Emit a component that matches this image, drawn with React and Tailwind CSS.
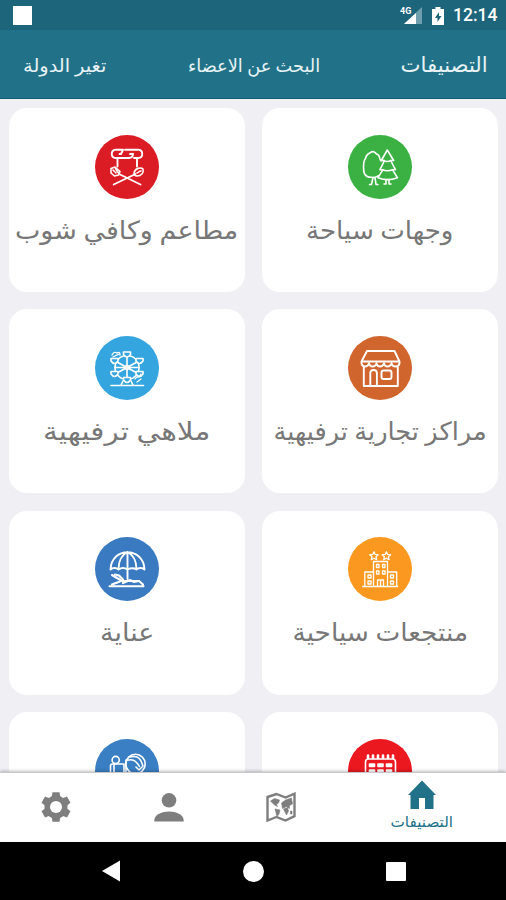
import React from "react";

const stroke = {
  fill: "none",
  stroke: "white",
  strokeWidth: 1.6,
  strokeLinecap: "round",
  strokeLinejoin: "round",
};

function Badge({ color, children }) {
  return (
    <svg viewBox="0 0 64 64" className="block size-16 shrink-0" {...stroke}>
      <circle cx="32" cy="32" r="32" fill={color} stroke="none" />
      {children}
    </svg>
  );
}

const Trees = () => (
  <Badge color="#3bb143">
    <path d="M30.500 40.500c-2 2-3 1.500-5 2-3-.5-6 .5-7.500-2-3-2-2-5-2.500-8 0-4 0-7 2-9 .5-4 3-5 5-6 3-2 5 0 6 1.500 3 .5 3 3 3.500 5l1 2" />
    <path d="M25 42.500l-1.500 7h-2M27 42.500l1 7h2" />
    <path d="M39.300 15l-6 10.500h3.200l-4.500 9.200h3l-5 8c6 2.500 13 2.500 19.400 0l-5-8h3l-4.700-9.200h3z" />
    <path d="M35 25.500q4 2 8 0M34.500 34.700q5 2 10 0M38 44.500v4.500h-2M41 44.500v4.500h2" />
  </Badge>
);

const Chef = () => (
  <Badge color="#dc1c24">
    <path d="M28 15l-2 4h-1.500M30 14.800h13.500c5 .5 5 8 0 8.200h-4.500M28 14.800h-7.500c-5 .5-5 8 0 8.200H34c3 0 4-1.500 4-4.200M35 19h3" strokeWidth="1.900" />
    <path d="M22.500 23.500v8M42 23.500v8" strokeWidth="1.900" />
    <path d="M24 39l21.500 10.500M40.500 39L18.700 49.500" strokeWidth="1.900" />
    <path d="M16 33.500l4-1.500 5 4.500-1.500 3.500-4 1-3.500-3zM18 35l3 3M20.500 33.500l2.500 4M39 38c1-5 7-6 9-4 1 4-2 7-6 7-2 0-3-1-3-3zM42 38c1 0 2-2 4-2" />
  </Badge>
);

const Shop = () => (
  <Badge color="#d0662e">
    <g strokeWidth="1.900">
      <path d="M19 15h27.500L51.500 25.500H13.500zM13.500 25.500v2c1 4 6 4 7.500 0 1 4 6 4 7.500 0 1 4 6 4 7.500 0 1 4 6 4 7.500 0 1 4 7 4 8 0v-2" />
      <path d="M15.800 30.500V50h34V30.500M22.300 50V37q0-3 3.300-3t3.300 3v13" />
      <rect x="33.500" y="34.500" width="10" height="8.500" rx="2" />
    </g>
  </Badge>
);

const cabins = [
  [32, 18.5],
  [44.500, 25],
  [44.500, 38],
  [32, 44],
  [19.500, 38],
  [19.500, 25],
];

const FerrisWheel = () => (
  <Badge color="#35a5df">
    <circle cx="32" cy="31.500" r="12" />
    <circle cx="32" cy="31.500" r="2" fill="white" />
    <path d="M32 21v21M22 26l20 11M42 26L22 37M20 31.500h24" strokeWidth="1.600" />
    {cabins.map(([x, y]) => (
      <path
        key={`${x}-${y}`}
        fill="#35a5df"
        d={`M${x - 3.5} ${y - 2.5}h7v2.500q-3.500 5-7 0z`}
      />
    ))}
    <path d="M16 49.500h32.500M28 45l-2 4M36 45l2 4" />
    <path d="M17 19q2-4 5-2 3-2 3 2M18 21l6-3M40 43q2-3 4-2l2-3M42 46l4-3" strokeWidth="1.300" />
  </Badge>
);

const Resort = () => (
  <Badge color="#fb9820">
    <path
      strokeWidth="1.300"
      d="M26 14.700l1.200 2.700 3 .3-2.200 2 .7 3-2.700-1.500-2.700 1.500.7-3-2.200-2 3-.3zM38.400 14.700l1.200 2.700 3 .3-2.200 2 .7 3-2.700-1.500-2.700 1.500.7-3-2.200-2 3-.3z"
    />
    <path
      strokeWidth="1.300"
      d="M14.700 49.500h35M25.500 49V24.500h14V49M16.800 49V35h8.700M39.500 35h9.200v14M28.500 27.500h2.500v3h-2.500zM34.500 27.500H37v3h-2.500zM28.500 34H31v3h-2.500zM34.500 34H37v3h-2.500zM20 38h3v3h-3zM20 44h3v3h-3zM42.500 38h3v3h-3zM42.500 44h3v3h-3zM29.500 49v-6h6v6M32.500 43v6"
    />
  </Badge>
);

const Umbrella = () => (
  <Badge color="#397ac1">
    <path d="M15.500 32.500c1-23 33-23 34 0-2-2-6-2-8 0-3-2-5-2-9 0-3-2-6-2-9 0-2-2-6-2-8 0zM32.500 15v27M32.500 15c-6 3-9 10-9 17M32.500 15c6 3 9 10 9 17" strokeWidth="1.900" />
    <path d="M14.500 49.300h34M17 38l10 6h17l4 3.500" strokeWidth="2.100" />
    <path d="M20 37.500l4 1 4 4M17 47.500l8-3M28 46l7-3 4 2 5-1" strokeWidth="2.200" />
  </Badge>
);

const Calendar = () => (
  <Badge color="#ec1820">
    <rect x="17.500" y="20" width="30" height="30" rx="3" />
    <path d="M20 16.500v2.500M25 16.500v2.500M30 16.500v2.500M35 16.500v2.500M40 16.500v2.500M45 16.500v2.500" strokeWidth="2.600" />
    <path
      d="M21.500 25h5v2.500h-5zM30 25h5v2.500h-5zM38.500 25h5v2.500h-5zM21.500 31h5v3h-5zM30 31h5v3h-5zM38.500 31h5v3h-5z"
      fill="white"
    />
  </Badge>
);

const Beach = () => (
  <Badge color="#3a7fc3">
    <circle cx="20.700" cy="21" r="3.600" />
    <path d="M15.500 45V27q0-2 2-2H29v21M19 26v20" />
    <circle cx="40.500" cy="25" r="9.700" />
    <path d="M31.500 21.500q6-2 9 1t4 5M35 18q8-2 11 4l2 5M31 21v14M41 28l3 3 3-3" />
  </Badge>
);

const categories = [
  { title: "وجهات سياحة", Icon: Trees, fit: "w-[147px]" },
  { title: "مطاعم وكافي شوب", Icon: Chef, fit: "w-[223px]" },
  { title: "مراكز تجارية ترفيهية", Icon: Shop, fit: "w-[213px]" },
  { title: "ملاهي ترفيهية", Icon: FerrisWheel, fit: "w-[167px]" },
  { title: "منتجعات سياحية", Icon: Resort, fit: "w-[176px]" },
  { title: "عناية", Icon: Umbrella, fit: "w-[54px]" },
  { Icon: Calendar },
  { Icon: Beach },
];

// Label squeezed or stretched horizontally so that it fills its own box.
function FitText({ className, children }) {
  const box = React.useRef(null);
  const text = React.useRef(null);
  const [scale, setScale] = React.useState(1);
  React.useLayoutEffect(() => {
    const fit = () => setScale(box.current.clientWidth / text.current.offsetWidth);
    fit();
    document.fonts?.ready.then(fit);
  }, []);
  return (
    <span ref={box} className={`flex justify-center whitespace-nowrap ${className}`}>
      <span ref={text} className="shrink-0" style={{ transform: `scaleX(${scale})` }}>
        {children}
      </span>
    </span>
  );
}

function StatusBar() {
  return (
    <div dir="ltr" className="flex h-[30px] shrink-0 items-center justify-between bg-[#1d657a] pr-[9px] pl-[13px]">
      <div className="size-[19px] bg-white" />
      <div className="flex items-center pt-[2px]">
        <svg viewBox="0 0 23 20" className="mr-[9px] h-5 w-[23px]">
          <path d="M22 1v17H4z" fill="#6f9eac" />
          <path d="M16 7v11H4z" fill="white" />
          <path d="M0 0h12v9H0z" fill="#1d657a" />
          <text x="0" y="8" fontSize="9" fontWeight="700" fill="white" fontFamily="Roboto, sans-serif">4G</text>
        </svg>
        <svg viewBox="0 0 12 19" className="mr-[9px] h-[19px] w-3">
          <path d="M3.500 0h5v2H12v16H0V2h3.500z" fill="white" />
          <path d="M7 5l-4 6h2.500v4l4-6H7z" fill="#1d657a" />
        </svg>
        <span className="w-[44px] text-[17.5px] leading-none font-medium text-white">12:14</span>
      </div>
    </div>
  );
}

function Header() {
  return (
    <header className="flex h-[69px] shrink-0 items-center justify-between border-b border-[#155f75] bg-[#217288] pt-[3px] pr-[18px] pl-[23px] text-[#e8f2f5]">
      <FitText className="w-[87px] text-[21px]">التصنيفات</FitText>
      <FitText className="ml-[2px] w-[132px] text-[18px]">البحث عن الاعضاء</FitText>
      <FitText className="w-[83px] text-[18px]">تغير الدولة</FitText>
    </header>
  );
}

function BottomNav() {
  return (
    <nav className="flex h-[70px] shrink-0 border-t border-[#c8c8ca] bg-white shadow-[0_-1px_3px_rgba(0,0,0,0.25)]">
      <div className="flex w-[169px] flex-col items-center pt-[7px] text-[#217288]">
        <svg viewBox="0 0 28 30" className="h-[30px] w-7" fill="currentColor">
          <path d="M14 .5L28 15h-2.500v14h-8.500V18h-6v11H2.500V15H0z" />
        </svg>
        <FitText className="mt-[3px] w-[63px] text-[15px] leading-[18px]">التصنيفات</FitText>
      </div>
      <div className="flex w-[112px] items-center justify-center pb-[2px]">
        <svg viewBox="0 0 30 30" className="size-[30px]" fill="none" stroke="#7e7e7e" strokeWidth="2.400">
          <path d="M1.500 5l9-3 9 3.500 9-3.800v22.500l-9 4.300-9-3.500-9 3.500z" />
          <path d="M4.500 9l4-2.500 5 1.500-1 3-2 1.500 1 2-3-1.500zM9 17l5 1-1 4-2 2.500zM15.500 11l4-3 6-2 1 6-3 1.500v3l-3-2-4 2zM17.500 17l4-1.500 1 3.500-2 4zM24.500 19h1.500v3h-1.500z" fill="#7e7e7e" strokeWidth=".6" />
        </svg>
      </div>
      <div className="flex w-[113px] items-center justify-center">
        <svg viewBox="0 0 30 30" className="size-[30px]" fill="#7e7e7e">
          <circle cx="15" cy="7.300" r="7.300" />
          <path d="M.3 28.500v-1.500c1-11.500 28.400-11.500 29.400 0v1.500z" />
        </svg>
      </div>
      <div className="flex w-[112px] items-center justify-center pb-[2px]">
        <svg viewBox="0 0 30 30" className="size-[30px]">
          <g fill="#7e7e7e">
            <circle cx="15" cy="15" r="11.500" />
            {[0, 60, 120].map((a) => (
              <path key={a} d="M11.500 .3h7l1 6v17.400l-1 6h-7l-1-6v-17.400z" transform={`rotate(${a} 15 15)`} />
            ))}
          </g>
          <circle cx="15" cy="15" r="6" fill="white" />
        </svg>
      </div>
    </nav>
  );
}

function SystemNav() {
  return (
    <div dir="ltr" className="flex h-[58px] shrink-0 items-center bg-black pl-[102px]">
      <svg viewBox="0 0 18 22" className="h-[22px] w-[18px]" fill="white">
        <path d="M18 .5v21L0 11z" />
      </svg>
      <div className="ml-[123px] size-[21px] rounded-full bg-white" />
      <div className="ml-[122px] h-[19px] w-5 rounded-[1px] bg-white" />
    </div>
  );
}

export default function App() {
  return (
    <div
      dir="rtl"
      className="flex h-[900px] w-[506px] flex-col overflow-hidden bg-[#efeff4] font-[Roboto,'DejaVu_Sans',sans-serif]"
    >
      <StatusBar />
      <Header />
      <main className="min-h-0 flex-1 overflow-hidden bg-[#efeff4] pt-[9px] pr-2 pl-[9px]">
        <div className="grid grid-cols-2 gap-x-[17px] gap-y-[17.4px]">
          {categories.map(({ title, Icon, fit }, i) => (
            <section key={i} className="flex h-[184px] flex-col items-center rounded-[18px] bg-white pt-[26.5px]">
              <Icon />
              {title && (
                <h2 className="mt-[11px] text-[25px] leading-[42px] text-[#777]">
                  <FitText className={fit}>{title}</FitText>
                </h2>
              )}
            </section>
          ))}
        </div>
      </main>
      <BottomNav />
      <SystemNav />
    </div>
  );
}
